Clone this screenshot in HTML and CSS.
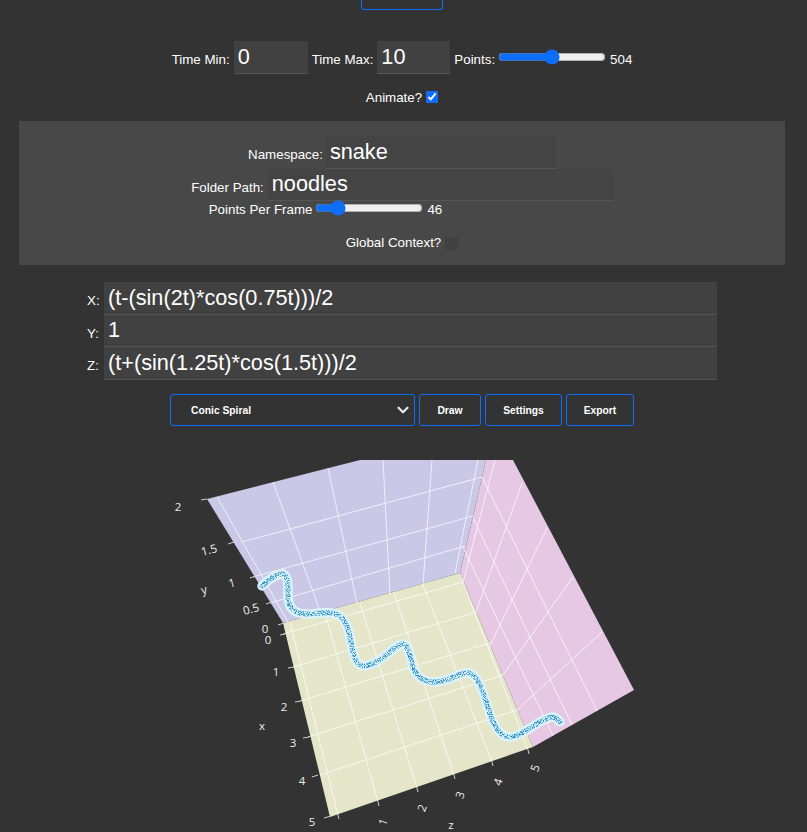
FILE: index.html
```html
<!DOCTYPE html>
<html lang="en">
<head>
<meta charset="utf-8">
<title>Parametric Plot</title>
<link rel="stylesheet" href="styles.css">
</head>
<body>
<div class="top-row"><button class="btn btn-top" type="button" aria-label="Menu"></button></div>

<div class="row row-time">
  <label class="lbl" for="tmin">Time Min:</label>
  <input class="field field-time" id="tmin" type="text" value="0">
  <label class="lbl" for="tmax">Time Max:</label>
  <input class="field field-time2" id="tmax" type="text" value="10">
  <label class="lbl" for="pts">Points:</label>
  <input class="slider" id="pts" type="range" min="0" max="1000" value="504">
  <span class="val">504</span>
</div>
<div class="row row-animate">
  <label class="lbl" for="anim">Animate?</label>
  <input class="check" id="anim" type="checkbox" checked>
</div>

<section class="panel">
  <div class="row row-ns">
    <label class="lbl" for="ns">Namespace:</label>
    <input class="field field-ns" id="ns" type="text" value="snake">
  </div>
  <div class="row row-folder">
    <label class="lbl" for="fp">Folder Path:</label>
    <input class="field field-fp" id="fp" type="text" value="noodles">
  </div>
  <div class="row row-ppf">
    <label class="lbl" for="ppf">Points Per Frame</label>
    <input class="slider" id="ppf" type="range" min="0" max="300" value="46">
    <span class="val">46</span>
  </div>
  <div class="row row-global">
    <label class="lbl" for="gc">Global Context?</label>
    <span class="check-off" id="gc"></span>
  </div>
</section>

<div class="exprs">
  <div class="expr"><label class="axis-lbl" for="ex">X:</label><input class="field field-expr" id="ex" type="text" value="(t-(sin(2t)*cos(0.75t)))/2"></div>
  <div class="expr"><label class="axis-lbl" for="ey">Y:</label><input class="field field-expr" id="ey" type="text" value="1"></div>
  <div class="expr"><label class="axis-lbl" for="ez">Z:</label><input class="field field-expr" id="ez" type="text" value="(t+(sin(1.25t)*cos(1.5t)))/2"></div>
</div>

<div class="row row-actions">
  <div class="select-wrap">
    <select class="select"><option>Conic Spiral</option></select>
    <svg class="chevron" viewBox="0 0 16 16"><path d="M2 5l6 6 6-6" fill="none" stroke="#e8e8e8" stroke-width="3" stroke-linecap="round" stroke-linejoin="round"/></svg>
  </div>
  <button class="btn btn-draw" type="button">Draw</button>
  <button class="btn btn-settings" type="button">Settings</button>
  <button class="btn btn-export" type="button">Export</button>
</div>

<svg class="plot" viewBox="0 460 807 372" width="807" height="372">
  <defs>
    <filter id="speckle" x="-5%" y="-5%" width="110%" height="110%">
      <feTurbulence type="fractalNoise" baseFrequency="1.1" numOctaves="2" seed="7" result="noise"/>
      <feColorMatrix in="noise" type="matrix" values="0 0 0 0 0  0 0 0 0 0  0 0 0 0 0  5 0 0 0 -2.1" result="mask"/>
      <feComposite in="SourceGraphic" in2="mask" operator="in"/>
    </filter>
    <path id="snake" d="M262,586C268,580 278,573 283,574C289,576 288,588 288,598C289,610 296,614 308,614C322,613 334,610 342,618C350,626 350,642 354,656C358,668 364,668 376,662C388,656 396,644 403,644C410,646 410,660 414,670C420,682 432,684 446,680C458,676 466,670 472,674C480,680 484,696 490,714C496,732 504,740 516,736C530,730 542,718 552,717C556,717 558,720 560,722"/>
  </defs>
  <polygon class="wall-xy" points="207,499 360,460 486,460 460,573 283,623"/>
  <polygon class="wall-yz" points="486,460 513,460 634,690 533,747 460,573"/>
  <polygon class="floor" points="283,623 460,573 533,747 330,817"/>

  <g class="grid">
    <path d="M217,497L288,622M273,482L320,611M328,468L357,603M383,460L390,595M432,460L423,585M478,460L455,573"/>
    <path d="M270,603L465,546M253,577L473,516M242,542L482,477"/>
    <path d="M463,582L495,460M476,612L522,483M488,650L547,528M503,675L573,577M517,710L602,632"/>
    <path d="M482,477L597,711M473,518L572,725M463,547L553,736"/>
    <path d="M290,622L338,815M325,613L378,802M360,603L417,788M394,593L454,775M423,585L492,762M460,575L528,750"/>
    <path d="M283,634L463,582M293,667L476,612M300,701L490,643M308,737L503,675M320,775L517,710"/>
  </g>

  <g class="ticks">
    <path d="M201,500L207,499M228,544L234,542M250,578L256,576M266,604L272,602M278,625L284,623"/>
    <path d="M280,635L285,634M288,668L294,667M295,702L301,701M303,738L309,737M312,777L318,775M324,818L331,816"/>
    <path d="M338,815L339,819M378,802L379,806M417,788L418,792M454,775L455,779M492,762L493,766M528,750L529,754"/>
    <path d="M436,460L436,463"/>
  </g>

  <g class="curve">
    <use class="halo" href="#snake"/>
    <g filter="url(#speckle)"><use class="core" href="#snake"/></g>
  </g>

  <g class="tick-text">
    <text x="178" y="511">2</text>
    <text x="209" y="554" transform="rotate(-15 209 550)">1.5</text>
    <text x="232" y="587" transform="rotate(-15 232 583)">1</text>
    <text x="251" y="613" transform="rotate(-15 251 609)">0.5</text>
    <text x="265" y="633">0</text>
    <text x="268" y="644">0</text>
    <text x="276" y="676">1</text>
    <text x="284" y="711">2</text>
    <text x="293" y="747">3</text>
    <text x="302" y="785">4</text>
    <text x="312" y="826">5</text>
    <text x="383" y="826" transform="rotate(-70 383 822)">1</text>
    <text x="422" y="812" transform="rotate(-70 422 808)">2</text>
    <text x="460" y="799" transform="rotate(-70 460 795)">3</text>
    <text x="498" y="786" transform="rotate(-70 498 782)">4</text>
    <text x="535" y="772" transform="rotate(-70 535 768)">5</text>
    <text class="axis-title" x="204" y="594" transform="rotate(-15 204 590)">y</text>
    <text class="axis-title" x="262" y="730">x</text>
    <text class="axis-title" x="451" y="829">z</text>
  </g>
</svg>
</body>
</html>
```
FILE: styles.css
```css
* { box-sizing: border-box; }
html, body { margin: 0; padding: 0; height: 832px; overflow: hidden; }
body {
  background: #333333;
  color: #fff;
  font-family: "Liberation Sans", Arial, sans-serif;
  font-size: 13.33px;
  padding-right: 3px;
}
.row { display: flex; justify-content: center; align-items: center; }
.top-row { display: flex; justify-content: center; height: 41px; }
.btn {
  background: #333333;
  color: #fff;
  border: 1px solid #0d6efd;
  border-radius: 3px;
  font-family: "Liberation Sans", Arial, sans-serif;
  font-size: 10.3px;
  font-weight: 700;
  height: 32px;
  padding: 0;
}
.btn-top { width: 82px; height: 10px; border-top: 0; border-radius: 0 0 3px 3px; }
.btn-draw { width: 62px; }
.btn-settings { width: 77px; }
.btn-export { width: 68px; }

.lbl { white-space: nowrap; }
.val { white-space: nowrap; }
.field {
  background: #414141;
  color: #fff;
  border: 0;
  border-bottom: 1px solid #555555;
  border-radius: 0;
  font-family: "Liberation Sans", Arial, sans-serif;
  font-size: 21.7px;
  padding: 0 4px;
  outline: none;
  height: 33px;
}
.row-time { height: 33px; gap: 4px; }
.row-time .lbl { position: relative; top: 2px; }
.row-time .val { position: relative; top: 2px; }
.field-time { width: 74px; }
.field-time2 { width: 73px; }
.slider { width: 108px; height: 16px; margin: 0 0 0 -1px; accent-color: #0d6efd; }
.row-time .slider { margin-top: -1px; }
.row-animate { height: 14px; margin-top: 16px; gap: 4px; }
.check { width: 12px; height: 12px; margin: 0; accent-color: #0d6efd; }

.panel {
  background: #484848;
  margin: 17px 19px 0;
  height: 144px;
  padding-top: 15px;
}
.row-ns { height: 33px; gap: 3px; }
.row-ns .lbl { position: relative; top: 2px; }
.field-ns { width: 230px; height: 33px; background: #444444; }
.row-folder { height: 32px; gap: 4px; }
.row-folder .lbl { position: relative; top: 2px; }
.field-fp { width: 345px; height: 32px; background: #444444; padding-bottom: 2px; }
.row-ppf { height: 16px; gap: 4px; padding-right: 153px; }
.row-ppf .slider { margin-top: -2px; }
.row-global { height: 14px; margin-top: 18px; gap: 4px; }
.check-off { display: block; width: 13px; height: 13px; background: #414141; margin-top: 2px; }

.exprs { margin-top: 17px; display: flex; flex-direction: column; }
.expr { display: flex; align-items: center; height: 32.5px; padding-left: 87px; }
.axis-lbl { width: 17px; padding-top: 5px; }
.field-expr { width: 613px; height: 32.5px; background: #414141; }

.row-actions { margin-top: 14.5px; gap: 4px; }
.select-wrap { position: relative; width: 245px; height: 32px; }
.select {
  appearance: none;
  width: 100%;
  height: 100%;
  background: #333333;
  color: #fff;
  border: 1px solid #0d6efd;
  border-radius: 3px;
  font-family: "Liberation Sans", Arial, sans-serif;
  font-size: 10.3px;
  font-weight: 700;
  padding: 0 0 0 20px;
}
.chevron { position: absolute; right: 6px; top: 10px; width: 12px; height: 12px; pointer-events: none; }

.plot { display: block; margin-top: 34px; }
.wall-xy { fill: #c9c8e6; }
.wall-yz { fill: #e6c8e5; }
.floor { fill: #e5e6c9; }
.grid path { fill: none; stroke: #fff; stroke-width: 0.8; stroke-opacity: 0.9; }
.ticks path { fill: none; stroke: #cfcfcf; stroke-width: 1; }
.curve use { fill: none; stroke-linecap: round; stroke-linejoin: round; }
.halo { stroke: #dcf3fb; stroke-width: 9.5; }
.core { stroke: #2b8fc4; stroke-width: 5; }
.tick-text text {
  fill: #eeeeee;
  font-family: "Open Sans", "Liberation Sans", sans-serif;
  font-size: 11.5px;
  text-anchor: middle;
}
```
